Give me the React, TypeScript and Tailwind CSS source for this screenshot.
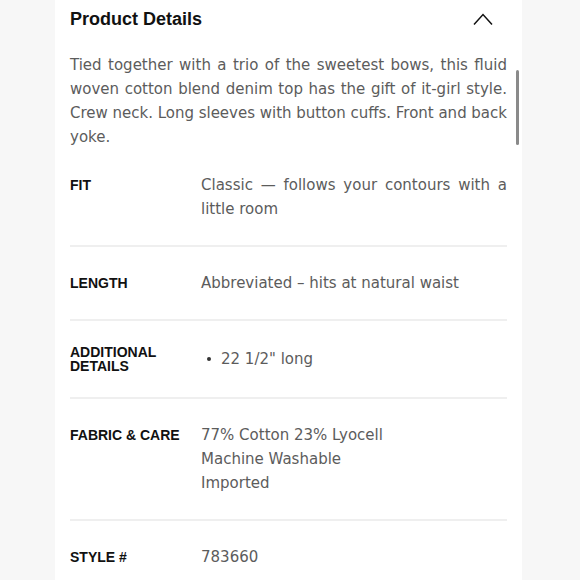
const rows: { label: string; twoLine?: boolean; value: React.ReactNode }[] = [
  {
    label: "FIT",
    value: <p className="text-justify">Classic — follows your contours with a little room</p>,
  },
  {
    label: "LENGTH",
    value: <p>Abbreviated – hits at natural waist</p>,
  },
  {
    label: "ADDITIONAL DETAILS",
    twoLine: true,
    value: (
      <ul className="mt-[2px]">
        <li className="flex items-center">
          <span className="ml-[6px] mr-[10px] h-[4px] w-[4px] rounded-full bg-[#333]" />
          22 1/2" long
        </li>
      </ul>
    ),
  },
  {
    label: "FABRIC & CARE",
    value: (
      <div>
        <p>77% Cotton 23% Lyocell</p>
        <p>Machine Washable</p>
        <p>Imported</p>
      </div>
    ),
  },
  {
    label: "STYLE #",
    value: <p>783660</p>,
  },
];

export default function App() {
  return (
    <div className="min-h-[580px] bg-[#f7f7f7]">
      <div className="relative ml-[55px] min-h-[580px] w-[467px] bg-white px-[15px]">
        {/* Header */}
        <div className="flex h-[38px] items-center justify-between">
          <h2 className="font-['Liberation_Sans',sans-serif] text-[18px] font-bold text-[#111]">
            Product Details
          </h2>
          <svg width="22" height="14" viewBox="0 0 22 14" className="mr-[13px]" fill="none">
            <path d="M2 12.5 L11 2.5 L20 12.5" stroke="#111" strokeWidth="1.5" />
          </svg>
        </div>

        {/* Description */}
        <p className="mt-[15px] text-justify font-['DejaVu_Sans',sans-serif] text-[15px] leading-[24px] text-[#5c5c5c] [word-spacing:-1px]">
          Tied together with a trio of the sweetest bows, this fluid woven cotton blend denim top has
          the gift of it-girl style. Crew neck. Long sleeves with button cuffs. Front and back yoke.
        </p>

        {/* Detail rows */}
        <div>
          {rows.map((row, i) => (
            <div
              key={row.label}
              className={
                i < rows.length - 1
                  ? "flex items-start border-b-2 border-[#efefef] py-[24px]"
                  : "flex items-start py-[24px]"
              }
            >
              <div
                className={
                  row.twoLine
                    ? "w-[131px] shrink-0 pr-[10px] font-['Liberation_Sans',sans-serif] text-[14px] font-bold leading-[14px] text-[#111]"
                    : "w-[131px] shrink-0 pt-[5px] font-['Liberation_Sans',sans-serif] text-[14px] font-bold leading-[14px] text-[#111]"
                }
              >
                {row.label}
              </div>
              <div className="flex-1 font-['DejaVu_Sans',sans-serif] text-[15px] leading-[24px] text-[#5c5c5c]">
                {row.value}
              </div>
            </div>
          ))}
        </div>

        {/* scrollbar */}
        <div className="absolute left-[461px] top-[70px] h-[75px] w-[3px] rounded-full bg-[#8a8a8a]" />
      </div>
    </div>
  );
}
